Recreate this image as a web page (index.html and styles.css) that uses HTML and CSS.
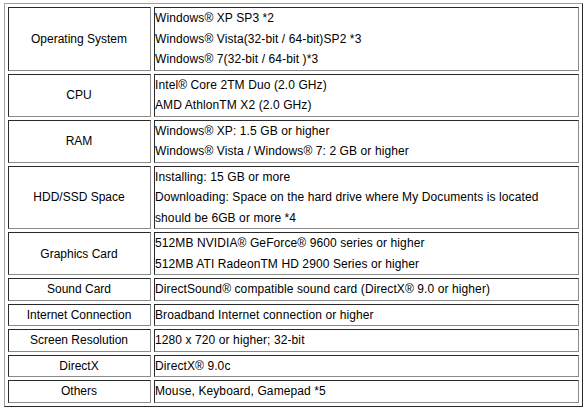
FILE: index.html
```html
<!DOCTYPE html>
<html>
<head>
<meta charset="utf-8">
<link rel="stylesheet" href="styles.css">
</head>
<body>
<table class="spec">
  <tr>
    <th class="label">Operating System</th>
    <td class="value"><div class="line">Windows® XP SP3 *2</div><div class="line">Windows® Vista(32-bit / 64-bit)SP2 *3</div><div class="line">Windows® 7(32-bit / 64-bit )*3</div></td>
  </tr>
  <tr>
    <th class="label">CPU</th>
    <td class="value"><div class="line">Intel® Core 2TM Duo (2.0 GHz)</div><div class="line">AMD AthlonTM X2 (2.0 GHz)</div></td>
  </tr>
  <tr>
    <th class="label">RAM</th>
    <td class="value"><div class="line">Windows® XP: 1.5 GB or higher</div><div class="line">Windows® Vista / Windows® 7: 2 GB or higher</div></td>
  </tr>
  <tr>
    <th class="label">HDD/SSD Space</th>
    <td class="value"><div class="line">Installing: 15 GB or more</div><div class="line">Downloading: Space on the hard drive where My Documents is located</div><div class="line">should be 6GB or more *4</div></td>
  </tr>
  <tr>
    <th class="label">Graphics Card</th>
    <td class="value"><div class="line">512MB NVIDIA® GeForce® 9600 series or higher</div><div class="line">512MB ATI RadeonTM HD 2900 Series or higher</div></td>
  </tr>
  <tr>
    <th class="label">Sound Card</th>
    <td class="value"><div class="line">DirectSound® compatible sound card (DirectX® 9.0 or higher)</div></td>
  </tr>
  <tr>
    <th class="label">Internet Connection</th>
    <td class="value"><div class="line">Broadband Internet connection or higher</div></td>
  </tr>
  <tr>
    <th class="label">Screen Resolution</th>
    <td class="value"><div class="line">1280 x 720 or higher; 32-bit</div></td>
  </tr>
  <tr>
    <th class="label">DirectX</th>
    <td class="value"><div class="line">DirectX® 9.0c</div></td>
  </tr>
  <tr>
    <th class="label">Others</th>
    <td class="value"><div class="line">Mouse, Keyboard, Gamepad *5</div></td>
  </tr>
</table>
</body>
</html>
```
FILE: styles.css
```css
html, body {
  margin: 0;
  padding: 0;
  background: #fff;
}
body {
  font-family: "Liberation Sans", Arial, Helvetica, sans-serif;
  font-size: 12px;
  color: #000;
}
.spec {
  margin: 3px 0 0 4px;
  width: 579px;
  border-collapse: separate;
  border-spacing: 3px;
  border-style: solid;
  border-width: 1px;
  border-color: #a0a0a0 #2a2a2a #2a2a2a #a0a0a0;
}
.label, .value {
  padding: 0 1px 0 0;
  border-style: solid;
  border-width: 1px;
  border-color: #2a2a2a #8a8a8a #8a8a8a #2a2a2a;
  vertical-align: middle;
}
.label {
  width: 140px;
  font-weight: normal;
  text-align: center;
}
.value {
  text-align: left;
  letter-spacing: 0.1px;
}
.line {
  line-height: 20.5px;
  white-space: nowrap;
}
```
